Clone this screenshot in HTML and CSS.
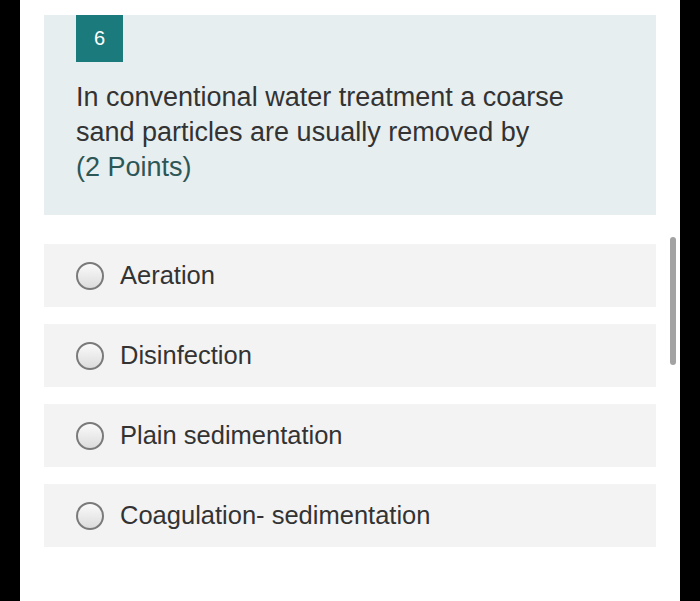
FILE: index.html
```html
<!DOCTYPE html>
<html>
<head>
<meta charset="utf-8">
<link rel="stylesheet" href="styles.css">
</head>
<body>
<div class="panel">
  <div class="question">
    <div class="badge">6</div>
    <div class="qtext">In conventional water treatment a coarse<br>sand particles are usually removed by<br><span class="points">(2 Points)</span></div>
  </div>
  <div class="options">
    <div class="option"><span class="radio"></span><span class="label">Aeration</span></div>
    <div class="option"><span class="radio"></span><span class="label">Disinfection</span></div>
    <div class="option"><span class="radio"></span><span class="label">Plain sedimentation</span></div>
    <div class="option"><span class="radio"></span><span class="label">Coagulation- sedimentation</span></div>
  </div>
  <div class="scrollbar"></div>
</div>
</body>
</html>
```
FILE: styles.css
```css
html, body {
  margin: 0;
  padding: 0;
  background: #000;
  height: 601px;
  overflow: hidden;
}
.panel {
  position: relative;
  margin-left: 20px;
  width: 660px;
  height: 601px;
  background: #fff;
  padding: 15px 0 0 24px;
  box-sizing: border-box;
  font-family: "Liberation Sans", Arial, sans-serif;
}
.question {
  width: 612px;
  height: 200px;
  background: #e7eef0;
  padding: 0 0 0 32px;
  box-sizing: border-box;
}
.badge {
  width: 47px;
  height: 47px;
  background: #1b7b7c;
  color: #fff;
  font-size: 20px;
  display: flex;
  align-items: center;
  justify-content: center;
}
.qtext {
  margin-top: 18px;
  font-size: 27px;
  line-height: 35px;
  color: #333;
}
.points {
  color: #2d5656;
}
.options {
  margin-top: 29px;
  display: flex;
  flex-direction: column;
  gap: 17px;
  width: 612px;
}
.option {
  height: 63px;
  background: #f3f3f3;
  display: flex;
  align-items: center;
  padding-left: 32px;
  box-sizing: border-box;
}
.radio {
  width: 28px;
  height: 28px;
  border-radius: 50%;
  border: 2px solid #7a7a7a;
  box-sizing: border-box;
  background: linear-gradient(#fafafa, #dcdcdc);
  flex: none;
}
.label {
  margin-left: 16px;
  font-size: 25.5px;
  color: #333;
}
.scrollbar {
  position: absolute;
  left: 650px;
  top: 237px;
  width: 6px;
  height: 128px;
  border-radius: 3px;
  background: #a3a3a3;
}
```
